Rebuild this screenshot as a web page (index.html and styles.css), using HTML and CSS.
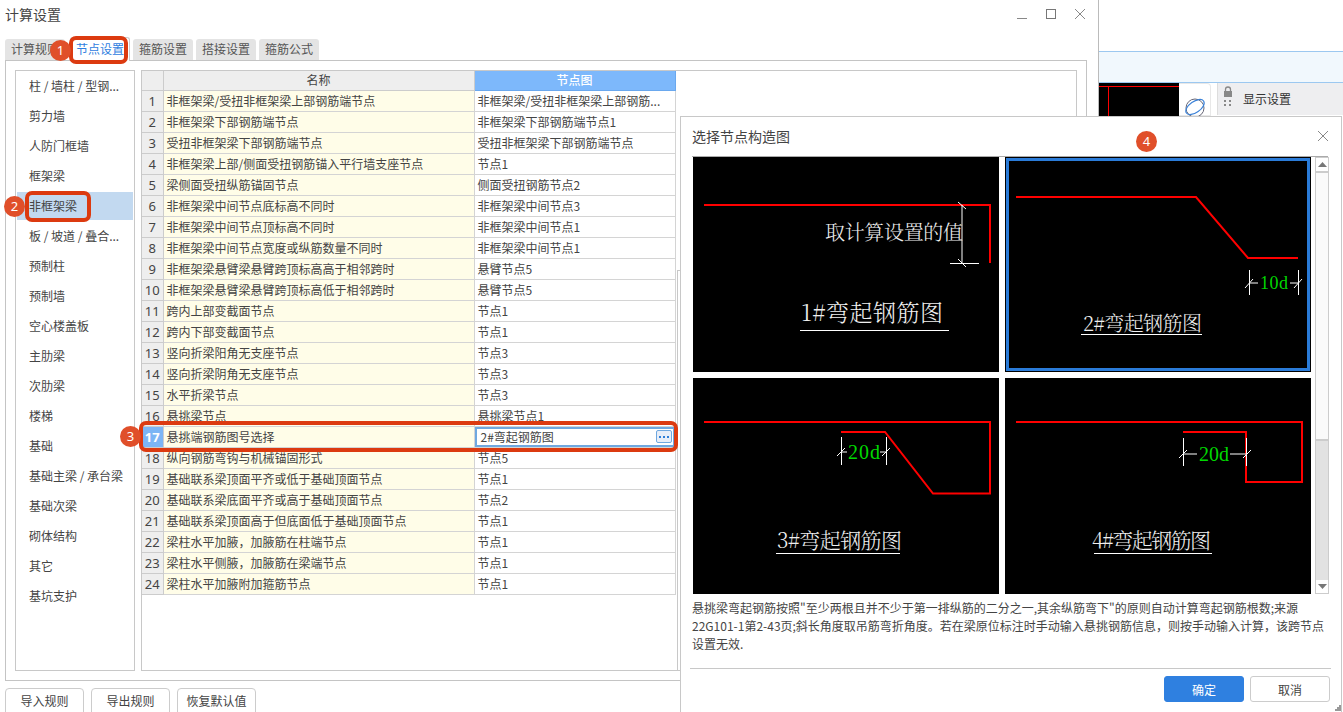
FILE: index.html
```html
<!DOCTYPE html>
<html lang="zh-CN">
<head>
<meta charset="utf-8">
<title>计算设置</title>
<link rel="stylesheet" href="styles.css">
</head>
<body>
<div class="desktop">
  <section class="settings">
    <header class="win-title">
      <span>计算设置</span>
      <div class="win-controls">
        <svg width="12" height="12" viewBox="0 0 12 12"><path d="M1 10.500H11" stroke="#888" fill="none"/></svg>
        <svg width="12" height="12" viewBox="0 0 12 12"><rect x="1.500" y="1.500" width="9" height="9" stroke="#777" fill="none"/></svg>
        <svg width="12" height="12" viewBox="0 0 12 12"><path d="M1 1L11 11M11 1L1 11" stroke="#888" fill="none"/></svg>
      </div>
    </header>
    <nav class="tabs">
      <span class="tab">计算规则</span>
      <span class="tab active">节点设置</span>
      <span class="tab">箍筋设置</span>
      <span class="tab">搭接设置</span>
      <span class="tab">箍筋公式</span>
    </nav>
    <div class="panel">
      <ul class="cats">
        <li>柱 / 墙柱 / 型钢...</li><li>剪力墙</li><li>人防门框墙</li><li>框架梁</li>
        <li class="sel">非框架梁</li><li>板 / 坡道 / 叠合...</li><li>预制柱</li><li>预制墙</li>
        <li>空心楼盖板</li><li>主肋梁</li><li>次肋梁</li><li>楼梯</li><li>基础</li>
        <li>基础主梁 / 承台梁</li><li>基础次梁</li><li>砌体结构</li><li>其它</li><li>基坑支护</li>
      </ul>
      <div class="table-box">
        <table class="nodes">
          <colgroup><col class="c-no"><col class="c-name"><col class="c-node"></colgroup>
          <thead><tr><th></th><th>名称</th><th class="hl">节点图</th></tr></thead>
          <tbody>
            <tr><td>1</td><td>非框架梁/受扭非框架梁上部钢筋端节点</td><td>非框架梁/受扭非框架梁上部钢筋...</td></tr>
            <tr><td>2</td><td>非框架梁下部钢筋端节点</td><td>非框架梁下部钢筋端节点1</td></tr>
            <tr><td>3</td><td>受扭非框架梁下部钢筋端节点</td><td>受扭非框架梁下部钢筋端节点</td></tr>
            <tr><td>4</td><td>非框架梁上部/侧面受扭钢筋锚入平行墙支座节点</td><td>节点1</td></tr>
            <tr><td>5</td><td>梁侧面受扭纵筋锚固节点</td><td>侧面受扭钢筋节点2</td></tr>
            <tr><td>6</td><td>非框架梁中间节点底标高不同时</td><td>非框架梁中间节点3</td></tr>
            <tr><td>7</td><td>非框架梁中间节点顶标高不同时</td><td>非框架梁中间节点1</td></tr>
            <tr><td>8</td><td>非框架梁中间节点宽度或纵筋数量不同时</td><td>非框架梁中间节点1</td></tr>
            <tr><td>9</td><td>非框架梁悬臂梁悬臂跨顶标高高于相邻跨时</td><td>悬臂节点5</td></tr>
            <tr><td>10</td><td>非框架梁悬臂梁悬臂跨顶标高低于相邻跨时</td><td>悬臂节点5</td></tr>
            <tr><td>11</td><td>跨内上部变截面节点</td><td>节点1</td></tr>
            <tr><td>12</td><td>跨内下部变截面节点</td><td>节点1</td></tr>
            <tr><td>13</td><td>竖向折梁阳角无支座节点</td><td>节点3</td></tr>
            <tr><td>14</td><td>竖向折梁阴角无支座节点</td><td>节点3</td></tr>
            <tr><td>15</td><td>水平折梁节点</td><td>节点3</td></tr>
            <tr><td>16</td><td>悬挑梁节点</td><td>悬挑梁节点1</td></tr>
            <tr class="cur"><td>17</td><td>悬挑端钢筋图号选择</td><td><div class="edit"><span>2#弯起钢筋图</span><span class="dots"><svg width="10" height="2" viewBox="0 0 10 2"><path d="M0 0h2v2H0zM4 0h2v2H4zM8 0h2v2H8z" fill="#2f7fd8"/></svg></span></div></td></tr>
            <tr><td>18</td><td>纵向钢筋弯钩与机械锚固形式</td><td>节点5</td></tr>
            <tr><td>19</td><td>基础联系梁顶面平齐或低于基础顶面节点</td><td>节点1</td></tr>
            <tr><td>20</td><td>基础联系梁底面平齐或高于基础顶面节点</td><td>节点2</td></tr>
            <tr><td>21</td><td>基础联系梁顶面高于但底面低于基础顶面节点</td><td>节点1</td></tr>
            <tr><td>22</td><td>梁柱水平加腋，加腋筋在柱端节点</td><td>节点1</td></tr>
            <tr><td>23</td><td>梁柱水平侧腋，加腋筋在梁端节点</td><td>节点1</td></tr>
            <tr><td>24</td><td>梁柱水平加腋附加箍筋节点</td><td>节点1</td></tr>
          </tbody>
        </table>
      </div>
    </div>
    <footer class="foot">
      <button class="btn">导入规则</button>
      <button class="btn">导出规则</button>
      <button class="btn">恢复默认值</button>
    </footer>
  </section>

  <section class="backapp">
    <div class="band"></div>
    <div class="back-row">
      <svg class="cad" width="80" height="33" viewBox="0 0 80 33"><rect width="80" height="33" fill="#000"/><path d="M0 3.500H80M9.500 3.500V33" stroke="#f00" fill="none"/></svg>
      <div class="tool">
        <svg width="22" height="22" viewBox="0 0 22 22"><circle cx="11" cy="11" r="9" fill="none" stroke="#667" stroke-width="1"/><ellipse cx="11" cy="10" rx="10.500" ry="5.500" transform="rotate(-35 11 10)" fill="none" stroke="#3b82d8" stroke-width="1.200"/></svg>
      </div>
      <div class="disp">
        <svg width="10" height="24" viewBox="0 0 10 24"><path d="M2.500 5V3.500a2.500 2.500 0 0 1 5 0V5" fill="none" stroke="#888" stroke-width="1.300"/><rect x="1" y="5" width="8" height="6" fill="#888"/><g fill="#888"><rect x="1" y="14" width="2" height="2"/><rect x="6" y="14" width="2" height="2"/><rect x="1" y="18" width="2" height="2"/><rect x="6" y="18" width="2" height="2"/></g></svg>
        <span>显示设置</span>
      </div>
    </div>
  </section>

  <section class="dialog">
    <header class="dlg-title">
      <span>选择节点构造图</span>
      <svg width="14" height="14" viewBox="0 0 14 14"><path d="M2 2L12 12M12 2L2 12" stroke="#888" fill="none"/></svg>
    </header>
    <div class="dlg-body">
      <div class="pics">
        <svg class="pic" viewBox="693 157 306 215">
          <rect x="693" y="157" width="306" height="215"/>
          <path class="rebar" d="M704 205H990V263"/>
          <path class="dim" d="M962 205V263M950 263.500H979M958 202L966 209M958 259L966 267"/>
          <text class="cad-t" x="825" y="240" font-size="20" textLength="138">取计算设置的值</text>
          <text class="cad-t" x="801" y="321" font-size="23" textLength="142">1#弯起钢筋图</text>
          <path class="dim" d="M800 330.500H949"/>
        </svg>
        <svg class="pic" viewBox="1005 157 306 215">
          <rect x="1005" y="157" width="306" height="215"/>
          <path class="rebar" d="M1016 197H1196L1248 258H1298"/>
          <path class="dim" d="M1249.500 270V295M1298.500 270V295M1249 283H1258M1290 283H1298M1245 288L1253 279M1294 288L1302 279"/>
          <text class="cad-g" x="1260" y="289" font-size="18" textLength="28">10d</text>
          <text class="cad-t" x="1083" y="331" font-size="20" textLength="119">2#弯起钢筋图</text>
          <path class="dim" d="M1081 334.500H1202"/>
          <rect class="frame" x="1007.500" y="159.500" width="301" height="210"/>
        </svg>
        <svg class="pic" viewBox="693 378 306 216">
          <rect x="693" y="378" width="306" height="216"/>
          <path class="rebar" d="M704 422H990V493.500H933L885 432H841"/>
          <path class="dim" d="M841.500 437V465M886.500 437V465M841 452H847M880 452H886M837 456L845 448M882 456L890 448"/>
          <text class="cad-g" x="848" y="459" font-size="20" textLength="32">20d</text>
          <text class="cad-t" x="777" y="548" font-size="21" textLength="125">3#弯起钢筋图</text>
          <path class="dim" d="M776 553.500H900"/>
        </svg>
        <svg class="pic" viewBox="1005 378 306 216">
          <rect x="1005" y="378" width="306" height="216"/>
          <path class="rebar" d="M1016 422H1302V482H1246V432H1183"/>
          <path class="dim" d="M1183.500 438V466M1246.500 438V466M1183 454H1197M1230 454H1246M1179 458L1187 450M1243 458L1251 450"/>
          <text class="cad-g" x="1199" y="461" font-size="20" textLength="30">20d</text>
          <text class="cad-t" x="1092" y="548" font-size="21" textLength="119">4#弯起钢筋图</text>
          <path class="dim" d="M1094 553.500H1212"/>
        </svg>
      </div>
      <div class="vbar">
        <div class="arrow"><svg width="9" height="5" viewBox="0 0 9 5"><path d="M0 5L4.500 0L9 5Z" fill="#777"/></svg></div>
        <div class="thumb"></div>
        <div class="track"></div>
        <div class="arrow"><svg width="9" height="5" viewBox="0 0 9 5"><path d="M0 0L4.500 5L9 0Z" fill="#777"/></svg></div>
      </div>
    </div>
    <p class="desc">悬挑梁弯起钢筋按照"至少两根且并不少于第一排纵筋的二分之一,其余纵筋弯下"的原则自动计算弯起钢筋根数;来源<br>22G101-1第2-43页;斜长角度取吊筋弯折角度。若在梁原位标注时手动输入悬挑钢筋信息，则按手动输入计算，该跨节点<br>设置无效.</p>
    <footer class="dlg-foot">
      <button class="act primary">确定</button>
      <button class="act">取消</button>
    </footer>
    <svg class="grip" width="6" height="6" viewBox="0 0 6 6"><path d="M4 0h2v2H4zM2 2h2v2H2zM4 2h2v2H4zM0 4h2v2H0zM2 4h2v2H2zM4 4h2v2H4z" fill="#999"/></svg>
  </section>

  <div class="mark-box mb-tab"></div>
  <div class="mark-box mb-item"></div>
  <div class="mark-box mb-row"></div>
  <span class="badge b1">1</span>
  <span class="badge b2">2</span>
  <span class="badge b3">3</span>
  <span class="badge b4">4</span>
</div>
</body>
</html>
```
FILE: styles.css
```css
* { box-sizing: border-box; }
html, body { margin: 0; padding: 0; }
body { font-family: "Noto Sans CJK SC", "Liberation Sans", sans-serif; font-size: 12px; color: #333; background: #fff; }
.desktop { position: relative; width: 1343px; height: 712px; overflow: hidden; background: #fff; }

.settings { position: absolute; left: 0; top: 0; width: 1099px; height: 712px; border-right: 1px solid #bbb; display: flex; flex-direction: column; background: #fff; padding: 0 11px 0 5px; }
.win-title { height: 36px; flex: none; display: flex; justify-content: space-between; align-items: flex-start; font-size: 14px; color: #444; padding-top: 4px; }
.win-controls { display: flex; gap: 17px; margin: 4px 1px 0 0; }
.tabs { display: flex; gap: 3px; height: 24px; flex: none; align-items: flex-end; }
.tab { width: 60px; height: 21px; line-height: 20px; text-align: center; background: #e4e4e4; color: #555; border-radius: 3px 3px 0 0; }
.tab.active { height: 24px; line-height: 22px; background: #fff; color: #2f80e0; border: 1px solid #ccc; border-bottom: 0; margin-bottom: -1px; position: relative; z-index: 1; margin-left: 2px; }
.panel { height: 621px; flex: none; border: 1px solid #c4c4c4; padding: 9px; display: flex; gap: 6px; }
.cats { list-style: none; margin: 0; padding: 0 1px; width: 120px; flex: none; border: 1px solid #c8c8c8; height: 601px; }
.cats li { height: 30px; line-height: 30px; padding-left: 12px; color: #444; white-space: nowrap; overflow: hidden; }
.cats li.sel { background: #c2d9f0; border-top: 1px solid #fff; border-bottom: 1px solid #fff; line-height: 28px; }
.table-box { flex: 1; border: 1px solid #c8c8c8; height: 601px; position: relative; }
.table-box::after { content: ""; position: absolute; left: 535px; top: 199px; bottom: 0; width: 4px; border-left: 1px solid #c8c8c8; border-top: 1px solid #c8c8c8; }
.nodes { border-collapse: collapse; table-layout: fixed; width: 533px; }
.c-no { width: 21px; } .c-name { width: 311px; } .c-node { width: 201px; }
.nodes th { height: 19px; padding: 0; font-weight: 400; text-align: center; background: #eee; border: 1px solid #ccc; border-top: 0; color: #444; line-height: 18px; }
.nodes th:first-child { border-left: 0; }
.nodes th.hl { background: #7db8fb; border-color: #6aa8ee; color: #fff; font-weight: 500; }
.nodes td { height: 21px; padding: 0 3px; border: 1px solid #d4d4d4; line-height: 20px; white-space: nowrap; overflow: hidden; color: #444; background: #fff; }
.nodes td:first-child { background: #eee; text-align: center; padding: 0; border-left: 0; border-color: #ccc; font-size: 13px; font-family: "Noto Sans", sans-serif; }
.nodes td:nth-child(2) { background: #fffde8; }
.cur td:first-child { background: #7cb5f5; color: #fff; font-weight: 700; }
.cur td:last-child { padding: 0; }
.edit { height: 20px; border: 2px solid #6fa8e0; display: flex; justify-content: space-between; align-items: center; padding: 0 1px 0 4px; }
.dots { width: 16px; height: 13px; border: 1px solid #6fa8e0; border-radius: 2px; background: #e8eef8; display: flex; align-items: center; justify-content: center; }
.foot { flex: none; display: flex; gap: 7px; padding-top: 7px; }
.btn { width: 79px; height: 30px; font: inherit; color: #444; background: #fff; border: 1px solid #ccc; border-radius: 4px; padding: 0 0 5px; }

.backapp { position: absolute; left: 1099px; top: 51px; right: 0; }
.band { height: 32px; background: #f1f8fd; border-top: 1px solid #9cc8f0; border-bottom: 1px solid #9cc8f0; }
.back-row { display: flex; }
.cad { flex: none; display: block; }
.tool { width: 32px; height: 33px; padding: 13px 0 0 5px; flex: none; border: 1px solid #e8e8e8; border-left: 0; border-radius: 0 4px 0 0; }
.disp { flex: 1; margin-left: 6px; height: 32px; background: #eeeef0; border-left: 1px solid #ddd; display: flex; align-items: center; gap: 10px; padding: 0 0 2px 5px; color: #333; }

.dialog { position: absolute; left: 680px; top: 116px; width: 662px; height: 596px; background: #fff; border: 1px solid #c8c8c8; border-bottom: 0; display: flex; flex-direction: column; padding: 0 0 0 11px; }
.dlg-title { height: 39px; flex: none; display: flex; justify-content: space-between; align-items: center; padding: 0 11px 2px 0; font-size: 14px; color: #444; }
.dlg-body { display: flex; gap: 4px; border-top: 1px solid #aaa; width: 636px; flex: none; height: 438px; }
.pics { display: grid; grid-template-columns: 306px 306px; grid-template-rows: 215px 216px; gap: 6px; margin-left: 1px; }
.pic { display: block; width: 100%; height: 100%; }
.rebar { fill: none; stroke: #f00; stroke-width: 2; }
.dim { fill: none; stroke: #fff; stroke-width: 1; }
.cad-t { fill: #f0f0f0; font-family: "Noto Serif CJK SC", "Liberation Serif", "Noto Sans CJK SC", serif; font-weight: 300; }
.cad-g { fill: #00d800; font-family: "Liberation Serif", serif; }
.frame { fill: none; stroke: #2a7bd8; stroke-width: 3; }
.vbar { width: 14px; flex: none; height: 437px; border: 1px solid #ccc; display: flex; flex-direction: column; background: #e2e2e2; }
.arrow { height: 13px; flex: none; background: #fff; display: flex; align-items: center; justify-content: center; }
.thumb { height: 270px; background: #fafafa; border-bottom: 2px solid #ccc; border-top: 2px solid #ccc; }
.track { flex: 1; }
.desc { margin: 5px 0 0; height: 60px; line-height: 18px; color: #444; white-space: nowrap; width: 642px; }
.dlg-foot { border-top: 1px solid #c8c8c8; margin: 9px 0 0 -2px; width: 641px; display: flex; justify-content: flex-end; gap: 6px; padding: 7px 1px 0 0; flex: none; }
.act { width: 80px; height: 26px; font: inherit; color: #444; background: #fff; border: 1px solid #ccc; border-radius: 3px; padding: 0; }
.act.primary { background: #2f80e0; border-color: #2f80e0; color: #fff; }
.grip { position: absolute; right: 0; bottom: 1px; }

.mark-box { position: absolute; z-index: 2; border: 4px solid #dc3a10; border-radius: 7px; }
.mb-tab { left: 69px; top: 36px; width: 59px; height: 28px; }
.mb-item { left: 25px; top: 191px; width: 66px; height: 31px; }
.mb-row { left: 139px; top: 421px; width: 539px; height: 31px; }
.badge { position: absolute; z-index: 3; width: 21px; height: 21px; border-radius: 50%; background: #e04f2a; color: #fff; text-align: center; line-height: 21px; font-size: 13px; font-family: "Noto Sans", sans-serif; }
.b1 { left: 50px; top: 40px; }
.b2 { left: 4px; top: 196px; }
.b3 { left: 120px; top: 426px; }
.b4 { left: 1136px; top: 131px; }
```
